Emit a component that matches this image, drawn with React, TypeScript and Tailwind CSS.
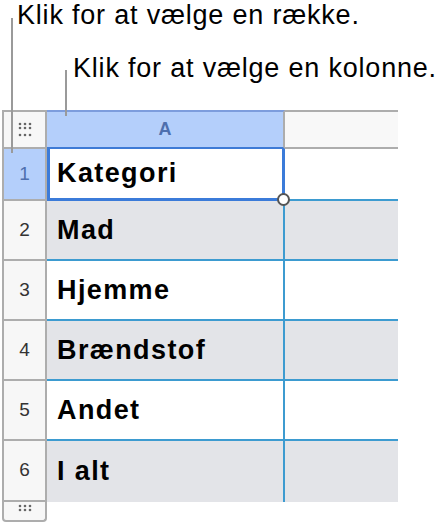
import React from 'react'

const rows = ['Kategori', 'Mad', 'Hjemme', 'Brændstof', 'Andet', 'I alt']

function Dots({ bottom }: { bottom?: boolean }) {
  // the little grip used in the corner and under the row headers
  const ys = bottom ? [3, 7] : [3, 7, 14]
  return (
    <svg width="14" height="17" viewBox="0 0 14 17">
      {ys.map((y) =>
        [2, 7, 12].map((x) => <circle key={`${x}-${y}`} cx={x} cy={y} r="1.3" fill="#666" />)
      )}
    </svg>
  )
}

export default function App() {
  return (
    <div
      className="relative w-[446px] h-[529px] bg-white overflow-hidden"
      style={{ fontFamily: '"Liberation Sans", Arial, sans-serif' }}
    >
      {/* leader lines */}
      <div className="absolute left-[11px] top-[18px] w-[2px] h-[135px] bg-[#9a9a9a] z-10" />
      <div className="absolute left-[65px] top-[70px] w-[2px] h-[46px] bg-[#9a9a9a] z-10" />

      <p className="pl-[17px] text-[27px] leading-[30px] tracking-[0.8px] text-black">
        Klik for at vælge en række.
      </p>
      <p className="mt-[23px] pl-[73px] text-[27px] leading-[30px] tracking-[0.8px] text-black">
        Klik for at vælge en kolonne.
      </p>

      <div className="mt-[27px] ml-[2px] grid grid-cols-[45px_238px_113px]">
        {/* header row */}
        <div className="h-[39px] bg-[#f7f7f7] border-2 border-[#adadad] flex items-center justify-center">
          <Dots />
        </div>
        <div className="h-[39px] bg-[#b4cffb] border-t-2 border-b-2 border-t-[#7d9ddd] border-b-[#3e7bd6] border-r-2 border-r-[#adadad] flex items-center justify-center text-[18px] font-bold text-[#4e6fae]">
          A
        </div>
        <div className="h-[39px] bg-[#f8f8f8] border-t-2 border-b-2 border-[#adadad]" />

        {rows.map((label, i) => {
          const first = i === 0
          const last = i === rows.length - 1
          const shade = i % 2 === 1 ? 'bg-[#e3e4e8]' : 'bg-white'
          const h = first ? 'h-[52px]' : last ? 'h-[61px]' : 'h-[60px]'
          return (
            <React.Fragment key={label}>
              <div
                className={`${h} border-x-2 border-b-2 border-[#adadad] flex items-center justify-center text-[19px] ${
                  first ? 'bg-[#b4cffb] text-[#4e6fae]' : 'bg-[#f7f7f7] text-[#333]'
                }`}
              >
                {i + 1}
              </div>
              <div
                className={`${h} relative ${shade} flex items-center text-[27px] font-bold tracking-[1.4px] text-black ${
                  first
                    ? 'pl-[7px] border-[3px] border-[#3b7bd9] border-t-0'
                    : `pl-[10px] border-r-2 border-r-[#3d9bd0] ${last ? '' : 'border-b-2 border-b-[#3d9bd0]'}`
                }`}
              >
                {label}
                {first && (
                  <span className="absolute right-[-8px] bottom-[-8px] w-[13px] h-[13px] rounded-full bg-white border-[2.5px] border-[#555] z-10" />
                )}
              </div>
              <div className={`${h} ${shade} ${last ? '' : 'border-b-2 border-b-[#3d9bd0]'}`} />
            </React.Fragment>
          )
        })}

        <div className="h-[20px] bg-[#f7f7f7] border-x-2 border-b-2 border-[#adadad] rounded-b-[4px] flex items-center justify-center">
          <Dots bottom />
        </div>
      </div>
    </div>
  )
}
